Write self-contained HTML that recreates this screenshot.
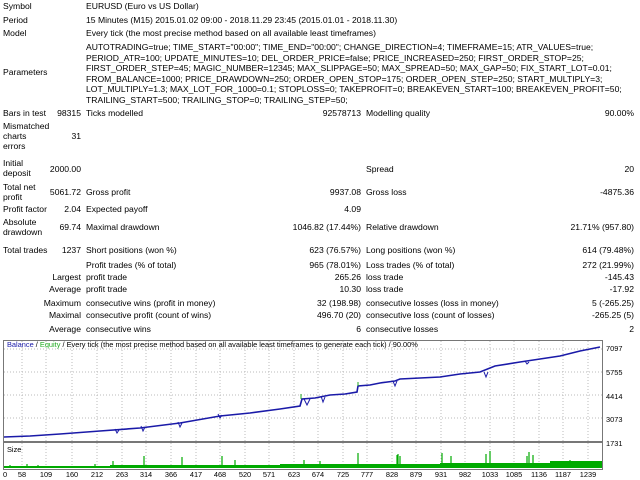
<!DOCTYPE html>
<html><head><meta charset="utf-8"><style>
body{margin:0;width:640px;height:480px;background:#fff;font-family:"Liberation Sans",sans-serif;font-size:8.6px;color:#000;position:relative;overflow:hidden}
.t{position:absolute;white-space:nowrap;line-height:10px}
.r{text-align:right}
</style></head><body>
<div class="t" style="left:3px;top:1px">Symbol</div><div class="t" style="left:86px;top:1px">EURUSD (Euro vs US Dollar)</div>
<div class="t" style="left:3px;top:15px">Period</div><div class="t" style="left:86px;top:15px">15 Minutes (M15) 2015.01.02 09:00 - 2018.11.29 23:45 (2015.01.01 - 2018.11.30)</div>
<div class="t" style="left:3px;top:28px">Model</div><div class="t" style="left:86px;top:28px">Every tick (the most precise method based on all available least timeframes)</div>
<div class="t" style="left:3px;top:67px">Parameters</div>
<div class="t" style="left:86px;top:42px;line-height:10.6px">AUTOTRADING=true; TIME_START="00:00"; TIME_END="00:00"; CHANGE_DIRECTION=4; TIMEFRAME=15; ATR_VALUES=true;<br>PERIOD_ATR=100; UPDATE_MINUTES=10; DEL_ORDER_PRICE=false; PRICE_INCREASED=250; FIRST_ORDER_STOP=25;<br>FIRST_ORDER_STEP=45; MAGIC_NUMBER=12345; MAX_SLIPPAGE=50; MAX_SPREAD=50; MAX_GAP=50; FIX_START_LOT=0.01;<br>FROM_BALANCE=1000; PRICE_DRAWDOWN=250; ORDER_OPEN_STOP=175; ORDER_OPEN_STEP=250; START_MULTIPLY=3;<br>LOT_MULTIPLY=1.3; MAX_LOT_FOR_1000=0.1; STOPLOSS=0; TAKEPROFIT=0; BREAKEVEN_START=100; BREAKEVEN_PROFIT=50;<br>TRAILING_START=500; TRAILING_STOP=0; TRAILING_STEP=50;</div>
<div class="t" style="left:3px;top:108px">Bars in test</div><div class="t r" style="right:559px;top:108px">98315</div><div class="t" style="left:86px;top:108px">Ticks modelled</div><div class="t r" style="right:279px;top:108px">92578713</div><div class="t" style="left:366px;top:108px">Modelling quality</div><div class="t r" style="right:6px;top:108px">90.00%</div>
<div class="t" style="left:3px;top:121px">Mismatched<br>charts<br>errors</div><div class="t r" style="right:559px;top:131px">31</div>
<div class="t" style="left:3px;top:158px">Initial<br>deposit</div><div class="t r" style="right:559px;top:164px">2000.00</div><div class="t" style="left:366px;top:164px">Spread</div><div class="t r" style="right:6px;top:164px">20</div>
<div class="t" style="left:3px;top:182px">Total net<br>profit</div><div class="t r" style="right:559px;top:187px">5061.72</div><div class="t" style="left:86px;top:187px">Gross profit</div><div class="t r" style="right:279px;top:187px">9937.08</div><div class="t" style="left:366px;top:187px">Gross loss</div><div class="t r" style="right:6px;top:187px">-4875.36</div>
<div class="t" style="left:3px;top:204px">Profit factor</div><div class="t r" style="right:559px;top:204px">2.04</div><div class="t" style="left:86px;top:204px">Expected payoff</div><div class="t r" style="right:279px;top:204px">4.09</div>
<div class="t" style="left:3px;top:217px">Absolute<br>drawdown</div><div class="t r" style="right:559px;top:222px">69.74</div><div class="t" style="left:86px;top:222px">Maximal drawdown</div><div class="t r" style="right:279px;top:222px">1046.82 (17.44%)</div><div class="t" style="left:366px;top:222px">Relative drawdown</div><div class="t r" style="right:6px;top:222px">21.71% (957.80)</div>
<div class="t" style="left:3px;top:245px">Total trades</div><div class="t r" style="right:559px;top:245px">1237</div><div class="t" style="left:86px;top:245px">Short positions (won %)</div><div class="t r" style="right:279px;top:245px">623 (76.57%)</div><div class="t" style="left:366px;top:245px">Long positions (won %)</div><div class="t r" style="right:6px;top:245px">614 (79.48%)</div>
<div class="t" style="left:86px;top:260px">Profit trades (% of total)</div><div class="t r" style="right:279px;top:260px">965 (78.01%)</div><div class="t" style="left:366px;top:260px">Loss trades (% of total)</div><div class="t r" style="right:6px;top:260px">272 (21.99%)</div>
<div class="t r" style="right:559px;top:272px">Largest</div><div class="t" style="left:86px;top:272px">profit trade</div><div class="t r" style="right:279px;top:272px">265.26</div><div class="t" style="left:366px;top:272px">loss trade</div><div class="t r" style="right:6px;top:272px">-145.43</div>
<div class="t r" style="right:559px;top:284px">Average</div><div class="t" style="left:86px;top:284px">profit trade</div><div class="t r" style="right:279px;top:284px">10.30</div><div class="t" style="left:366px;top:284px">loss trade</div><div class="t r" style="right:6px;top:284px">-17.92</div>
<div class="t r" style="right:559px;top:298px">Maximum</div><div class="t" style="left:86px;top:298px">consecutive wins (profit in money)</div><div class="t r" style="right:279px;top:298px">32 (198.98)</div><div class="t" style="left:366px;top:298px">consecutive losses (loss in money)</div><div class="t r" style="right:6px;top:298px">5 (-265.25)</div>
<div class="t r" style="right:559px;top:310px">Maximal</div><div class="t" style="left:86px;top:310px">consecutive profit (count of wins)</div><div class="t r" style="right:279px;top:310px">496.70 (20)</div><div class="t" style="left:366px;top:310px">consecutive loss (count of losses)</div><div class="t r" style="right:6px;top:310px">-265.25 (5)</div>
<div class="t r" style="right:559px;top:324px">Average</div><div class="t" style="left:86px;top:324px">consecutive wins</div><div class="t r" style="right:279px;top:324px">6</div><div class="t" style="left:366px;top:324px">consecutive losses</div><div class="t r" style="right:6px;top:324px">2</div>

<svg style="position:absolute;left:0;top:0" width="640" height="480">
<rect x="3.5" y="340.5" width="599" height="101" fill="#fff" stroke="#777"/>
<rect x="3.5" y="442.5" width="599" height="27" fill="#fff" stroke="#777"/>
<g stroke="#bbb" stroke-dasharray="1,2">
<path d="M4 349H602M4 372H602M4 395H602M4 418H602"/>
<path d="M22 341V469M46 341V469M72 341V469M97 341V469M122 341V469M146 341V469M171 341V469M196 341V469M220 341V469M245 341V469M269 341V469M294 341V469M318 341V469M343 341V469M367 341V469M392 341V469M416 341V469M441 341V469M465 341V469M490 341V469M514 341V469M539 341V469M563 341V469M588 341V469"/>
</g>
<polyline fill="none" stroke="#1a1aa8" stroke-width="1.6" points="4,437 30,436 60,434 100,431 140,428 180,423 220,416 250,413 280,409 300,406 302,399 315,398 330,395 345,394 357,392 358,386 370,385 380,383 395,381 400,379 420,378 440,377 460,374 480,372 495,366 520,362 540,359 560,356 580,351 600,347"/>
<path d="M115 429l2 4 2-3M141 426l2 5 2-4M178 422l2 5 2-4M218 414l2 4 2-3M304 399l3 6 3-6M321 396l2 6 2-5M393 381l2 5 2-5M484 372l2 5 2-5M525 361l2 3 2-2" fill="none" stroke="#1a1aa8"/>
<path d="M301 399v-5M358 386v-4" stroke="#2a2"/>
<text x="7" y="347" font-size="7.4" font-family="Liberation Sans" fill="#000"><tspan fill="#1a1aa8">Balance</tspan> / <tspan fill="#2a2">Equity</tspan> / Every tick (the most precise method based on all available least timeframes to generate each tick) / 90.00%</text>
<text x="7" y="452" font-size="7.4" font-family="Liberation Sans">Size</text>
<path d="M4 468V466H110V468Z M110 468V465H280V468ZM280 468V464H440V468ZM440 468V463H550V468ZM550 468V461H602V468Z" fill="#0a0"/>
<path d="M10 468V465M27 468V464M38 468V465M95 468V464M113 468V461M144 468V456M182 468V457M222 468V456M235 468V460M304 468V460M320 468V461M358 468V453M397 468V455M398 468V454M400 468V456M442 468V453M451 468V456M486 468V454M490 468V451M527 468V456M529 468V452M533 468V455M570 468V460M597 468V461" stroke="#0a0" stroke-width="1.2"/>
<g font-size="7.4" font-family="Liberation Sans">
<text x="606" y="351">7097</text><text x="606" y="375">5755</text><text x="606" y="399">4414</text><text x="606" y="422">3073</text><text x="606" y="446">1731</text>
<g text-anchor="middle">
<text x="5" y="477">0</text><text x="22" y="477">58</text><text x="46" y="477">109</text><text x="72" y="477">160</text><text x="97" y="477">212</text><text x="122" y="477">263</text><text x="146" y="477">314</text><text x="171" y="477">366</text><text x="196" y="477">417</text><text x="220" y="477">468</text><text x="245" y="477">520</text><text x="269" y="477">571</text><text x="294" y="477">623</text><text x="318" y="477">674</text><text x="343" y="477">725</text><text x="367" y="477">777</text><text x="392" y="477">828</text><text x="416" y="477">879</text><text x="441" y="477">931</text><text x="465" y="477">982</text><text x="490" y="477">1033</text><text x="514" y="477">1085</text><text x="539" y="477">1136</text><text x="563" y="477">1187</text><text x="588" y="477">1239</text>
</g></g>
</svg>
</body></html>
